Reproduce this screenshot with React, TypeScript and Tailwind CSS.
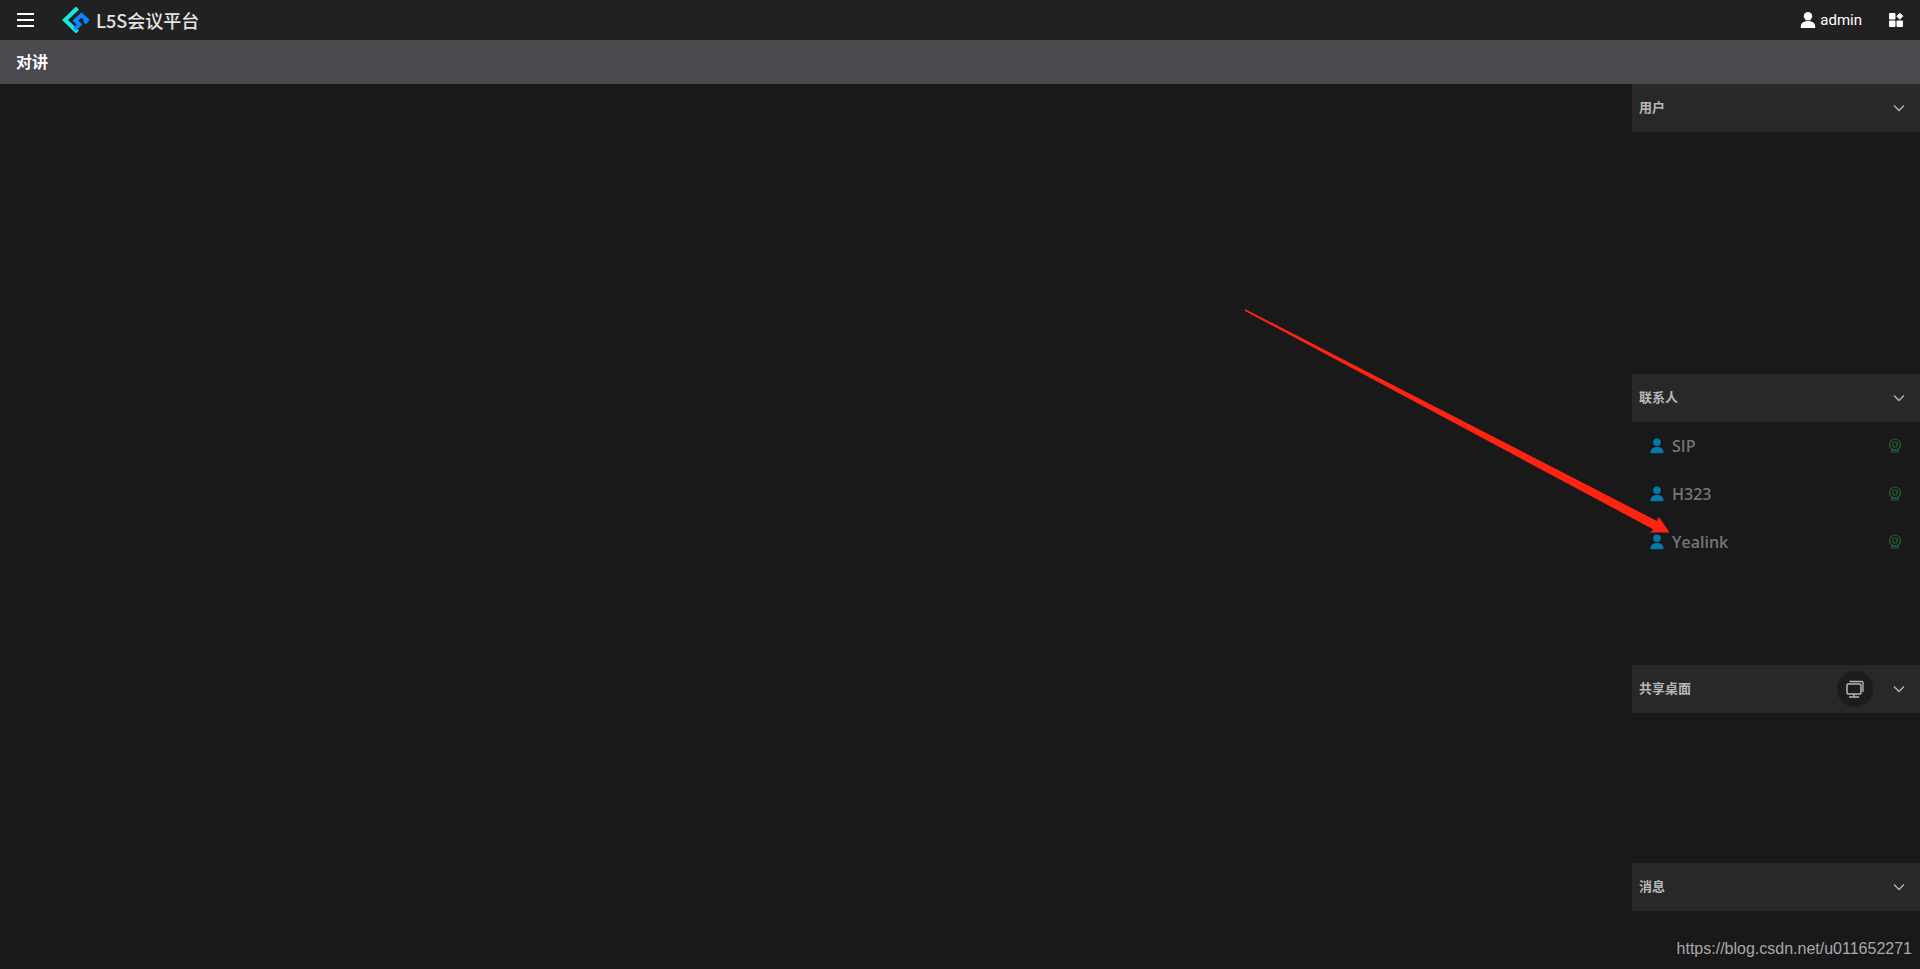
import type { ReactNode } from "react";

const contacts = ["SIP", "H323", "Yealink"];

function UserIcon({ className }: { className: string }) {
  return (
    <svg viewBox="0 0 16 16" fill="currentColor" className={className}>
      <circle cx="8" cy="4.2" r="4.2" />
      <path d="M.8 16v-1.6C.8 11.4 3.6 9 8 9s7.2 2.4 7.2 5.4V16z" />
    </svg>
  );
}

function ContactIcon() {
  return (
    <svg width="14" height="16" viewBox="0 0 14 16" fill="currentColor" className="text-[#0478a8]">
      <circle cx="7" cy="4.2" r="3.8" />
      <path d="M.5 14.2C.5 11.2 3 9 7 9s6.5 2.2 6.5 5.2c0 .7-.4 1-1 1h-11c-.6 0-1-.3-1-1z" />
    </svg>
  );
}

function CameraIcon() {
  return (
    <svg width="14" height="16" viewBox="0 0 14 16" fill="none" stroke="currentColor" strokeWidth="1.2">
      <circle cx="7" cy="6.5" r="5.5" />
      <circle cx="7" cy="6.5" r="2.5" />
      <path d="M4 11.5v2M10 11.5v2M3 14h8M4 12h6" />
    </svg>
  );
}

function ChevronIcon() {
  return (
    <svg width="12" height="12" viewBox="0 0 12 12" fill="none" stroke="currentColor" strokeWidth="1.3">
      <path d="M1 3.5l5 5 5-5" />
    </svg>
  );
}

function ScreenIcon() {
  return (
    <svg width="18" height="18" viewBox="0 0 18 18" fill="none" stroke="currentColor">
      <rect x="1" y="4" width="14" height="10" rx="1" strokeWidth="1.5" />
      <path d="M3.5 1.5H16a1 1 0 0 1 1 1V12M8 14v3M3 17h10" strokeWidth="1.3" />
    </svg>
  );
}

function Logo() {
  return (
    <svg width="28" height="28" viewBox="0 0 28 28" fill="none">
      <path d="M15.5 2L3 14l12.5 12" stroke="#17e6e0" strokeWidth="4.200" />
      <path d="M22.5 17l2.500-2.800L19.500 9 13.500 14.500l4 4-5 5" stroke="#0a84ff" strokeWidth="4" />
    </svg>
  );
}

type PanelProps = {
  title: string;
  className: string;
  action?: ReactNode;
  children?: ReactNode;
};

function Panel({ title, className, action, children }: PanelProps) {
  return (
    <section className={className}>
      <div className="flex h-12 items-center bg-[#282828] px-[7px] text-[#b8b8b8]">
        <h2 className="flex-1 text-[13px] font-bold">{title}</h2>
        {action}
        <button type="button" aria-label={title} className="flex w-7 justify-center">
          <ChevronIcon />
        </button>
      </div>
      {children}
    </section>
  );
}

export default function App() {
  return (
    <div className="relative flex h-screen flex-col overflow-hidden bg-[#191919] font-['Open_Sans','Noto_Sans_CJK_SC',sans-serif]">
      {/* Top bar */}
      <header className="flex h-10 shrink-0 items-center bg-[#212121] px-4 text-white">
        <button type="button" aria-label="Menu" className="flex w-5 justify-center">
          <svg width="18" height="14" viewBox="0 0 18 14" stroke="currentColor" strokeWidth="2">
            <path d="M0 1h17M0 7h17M0 13h17" />
          </svg>
        </button>
        <a href="#" className="ml-[26px] flex items-center gap-1.5">
          <Logo />
          <span className="font-['Noto_Sans_CJK_SC',sans-serif] text-lg font-medium text-[#e4e4e4]">L5S会议平台</span>
        </a>
        <button type="button" className="ml-auto flex items-center gap-1 font-['Roboto',sans-serif] text-[15px]">
          <UserIcon className="size-4" />
          admin
        </button>
        <button type="button" aria-label="Apps" className="ml-[26px]">
          <svg width="16" height="16" viewBox="0 0 16 16" fill="currentColor">
            <rect x="1" y="1" width="6.5" height="6.5" rx="1" />
            <path d="M11.8 1.2l3 3-3 3-3-3z" stroke="currentColor" strokeLinejoin="round" />
            <rect x="1" y="8.5" width="6.5" height="6.5" rx="1" />
            <rect x="8.5" y="8.5" width="6.5" height="6.5" rx="1" />
          </svg>
        </button>
      </header>

      <div className="flex h-11 shrink-0 items-center bg-[#4a494d] px-4">
        <h1 className="text-base font-bold text-white">对讲</h1>
      </div>

      <div className="flex min-h-0 flex-1">
        <main className="flex-1" />
        <aside className="flex w-[15%] flex-col">
          <Panel title="用户" className="flex-[290]" />
          <Panel title="联系人" className="flex-[291]">
            <ul>
              {contacts.map((name) => (
                <li key={name} className="flex h-12 items-center gap-2 px-[18px]">
                  <ContactIcon />
                  <span className="flex-1 text-base font-semibold text-[#757575]">{name}</span>
                  <button type="button" aria-label={name} className="text-[#245f39]">
                    <CameraIcon />
                  </button>
                </li>
              ))}
            </ul>
          </Panel>
          <Panel
            title="共享桌面"
            className="flex-[198]"
            action={
              <button type="button" aria-label="共享桌面" className="mr-3 flex size-9 items-center justify-center rounded-full bg-[#1c1c1c]">
                <ScreenIcon />
              </button>
            }
          />
          <Panel title="消息" className="flex-[106]" />
        </aside>
      </div>

      {/* Arrow pointing at the contact */}
      <svg width="426" height="224" viewBox="0 0 426 224" className="pointer-events-none absolute top-[309px] right-[250px]">
        <path d="M1 0L413 212L415 208L425.5 223.5H406L409.5 220.5L1 2z" fill="#ff2312" />
      </svg>
      <span className="absolute right-2 bottom-2 font-['Liberation_Sans',sans-serif] text-base text-[#a8a8a8]">
        https://blog.csdn.net/u011652271
      </span>
    </div>
  );
}
